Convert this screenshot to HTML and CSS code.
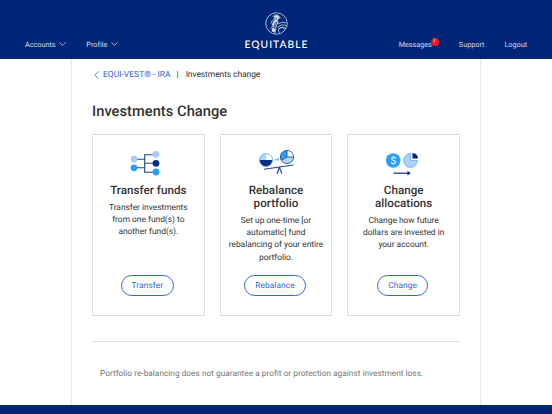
FILE: index.html
```
<!DOCTYPE html>
<html lang="en">
<head>
    <meta charset="UTF-8">
    <meta name="viewport" content="width=device-width, initial-scale=1.0">
    <title>Investments Change</title>
    <link rel="stylesheet" href="styles.css">
</head>
<body>
    <header class="header">
        <nav class="nav nav-left">
            <a class="accounts">Accounts <svg width="7" height="4" viewBox="0 0 7 4"><path d="M.5 .5L3.5 3.4L6.5 .5"/></svg></a>
            <a class="profile">Profile <svg width="7" height="4" viewBox="0 0 7 4"><path d="M.5 .5L3.5 3.4L6.5 .5"/></svg></a>
        </nav>
        <div class="logo">
            <svg width="23" height="23" viewBox="0 0 46 46">
                <circle cx="23" cy="23" r="21.5"/>
                <path d="M15 10q3-6 10-4q6 2 5 8M18 13q1-5 6-5q4 1 4 5M12 23q1-7 7-9l4 2l-1 6M20 17l-3 9l-6 8M22 19l-3 10l-4 10M24 22l-2 9l-2 12M26 24q8-6 17-2M25 30q7-7 18-3M27 34q4-5 15-2M29 42q-5-6 0-10q6-4 10 2"/>
                <path class="fill" d="M18 9q4-4 9-1l1 5l-3 3l2 5l-5 7l-3 13l-6-3l4-12l-4 2l3-8l4-4z"/>
                <path class="cut" d="M21 11l3 2l-3 2M21 20l-4 12M24 19l-5 15"/>
            </svg>
            <span>EQUITABLE</span>
        </div>
        <nav class="nav nav-right">
            <a class="messages">Messages<span class="badge">!</span></a>
            <a class="support">Support</a>
            <a class="logout">Logout</a>
        </nav>
    </header>

    <main class="content">
        <div class="breadcrumb">
            <svg width="5" height="8" viewBox="0 0 5 8"><path d="M4.5 .5L.8 4L4.5 7.5"/></svg>
            <a>EQUI-VEST® - IRA</a>
            <span class="divider">|</span>
            <span class="current">Investments change</span>
        </div>
        <h1>Investments Change</h1>

        <div class="cards">
            <section class="card">
                <svg class="icon icon-transfer" width="40" height="28" viewBox="0 0 40 28">
                    <path d="M9 10.2H19.7M9 18.8H19.7M31 5.7H19.7V23.3H31M19.7 14.3H31" fill="none" stroke="#26408f" stroke-width="1.1"/>
                    <circle cx="9" cy="10.2" r="3.4" fill="#a5d0ee"/>
                    <circle cx="9" cy="18.8" r="3.4" fill="#2b9ff8"/>
                    <circle cx="31" cy="5.3" r="3.4" fill="#a5d0ee"/>
                    <circle cx="31" cy="14.3" r="3.4" fill="#0b2d84"/>
                    <circle cx="31" cy="23" r="3.4" fill="#2b9ff8"/>
                </svg>
                <h2>Transfer funds</h2>
                <p>Transfer investments<br>from one fund(s) to<br>another fund(s).</p>
                <button>Transfer</button>
            </section>

            <section class="card">
                <svg class="icon" width="40" height="28" viewBox="0 0 40 28">
                    <circle cx="10" cy="11" r="6.5" fill="#a9d7f5"/>
                    <path d="M10 11V4.5A6.5 6.5 0 0 1 16.5 11Z" fill="#fff"/>
                    <path d="M3.5 11A6.5 6.5 0 0 0 16.5 11Z" fill="#0b2d84"/>
                    <circle cx="10" cy="11" r="6.5" fill="none" stroke="#48a9f0" stroke-width=".7"/>
                    <circle cx="31" cy="8" r="6.6" fill="#b1d8f3"/>
                    <path d="M31 8V1.4A6.6 6.6 0 0 0 25.3 11.3Z" fill="#2b9ff8"/>
                    <path d="M31 8V1.4A6.6 6.6 0 0 1 37.6 8Z" fill="#fff"/>
                    <path d="M31 1.4V8H37.6M31 8L25.3 11.3M24.4 8A6.6 6.6 0 1 0 37.6 8A6.6 6.6 0 1 0 24.4 8" fill="none" stroke="#174493" stroke-width=".8"/>
                    <path d="M18.2 11L22.5 10.4M21 9.3L22.8 10.4L21.2 11.7" fill="none" stroke="#48a9f0" stroke-width=".8"/>
                    <path d="M8 20.3L37.5 16M21 24.8L23.4 18.5L26 24.8" fill="none" stroke="#26408f" stroke-width="1.1"/>
                </svg>
                <h2>Rebalance<br>portfolio</h2>
                <p>Set up one-time [or<br>automatic] fund<br>rebalancing of your entire<br>portfolio.</p>
                <button>Rebalance</button>
            </section>

            <section class="card">
                <svg class="icon" width="40" height="28" viewBox="0 0 40 28">
                    <circle cx="9.2" cy="11.5" r="7.3" fill="#2b9ff8"/>
                    <text x="9.2" y="15" text-anchor="middle" font-size="10" fill="#fff">$</text>
                    <path d="M26.5 11.5V4.6A6.9 6.9 0 1 0 33.4 11.5Z" fill="#abd3ef" stroke="#55b2f3" stroke-width=".8"/>
                    <path d="M28.5 9.4V4A5.5 5.5 0 0 1 34 9.4Z" fill="#00237a"/>
                    <path d="M9.5 24.2H25.5" stroke="#0b2d84" stroke-width="1.2"/>
                    <path d="M23.5 21.8L26.8 24.2L23.5 26.6Z" fill="#0b2d84"/>
                </svg>
                <h2>Change<br>allocations</h2>
                <p>Change how future<br>dollars are invested in<br>your account.</p>
                <button>Change</button>
            </section>
        </div>

        <p class="note">Portfolio re-balancing does not guarantee a profit or protection against investment loss.</p>
    </main>
    <footer class="footer"></footer>
</body>
</html>
```
FILE: styles.css
```
* {
    box-sizing: border-box;
}

body {
    margin: 0;
    height: 414px;
    overflow: hidden;
    display: flex;
    flex-direction: column;
    font-family: Roboto, "Liberation Sans", sans-serif;
    text-rendering: geometricPrecision;
    color: #333;
    background-color: #fff;
}

.header {
    height: 59px;
    flex-shrink: 0;
    background-color: #002677;
    display: grid;
    grid-template-columns: 1fr 80px 1fr;
}

.nav {
    display: flex;
    padding-top: 39px;
    font-size: 7.3px;
    line-height: 11px;
    letter-spacing: -0.03px;
    color: #d4daea;
}

.nav-left {
    padding-left: 25px;
    gap: 20px;
}

.nav-right {
    justify-content: flex-end;
    padding-right: 25px;
}

.nav a {
    white-space: nowrap;
}

.nav svg {
    margin-left: 2px;
    vertical-align: 1px;
    fill: none;
    stroke: #ccd3e4;
    stroke-width: 0.8;
}

.messages {
    position: relative;
    margin-right: 27px;
}

.badge {
    position: absolute;
    left: 32px;
    top: -1px;
    width: 8px;
    height: 8px;
    border-radius: 50%;
    background-color: #f5151f;
    color: #fff;
    font-size: 6px;
    line-height: 8px;
    text-align: center;
}

.support {
    margin-right: 20px;
}

.logo {
    padding-top: 12px;
    display: flex;
    flex-direction: column;
    align-items: center;
    color: #fff;
}

.logo svg {
    fill: none;
    stroke: #dce2ef;
    stroke-width: 1.5;
}

.logo .fill {
    fill: #dce2ef;
    stroke: none;
}

.logo .cut {
    stroke: #002677;
}

.logo span {
    font-family: Lato, sans-serif;
    font-size: 10.3px;
    font-weight: 500;
    line-height: 12px;
    letter-spacing: 1px;
    margin-top: 4px;
    margin-right: -1px;
}

.content {
    width: 410px;
    height: 346px;
    margin: 0 auto;
    padding: 10px 20px 0;
    border-left: 1px solid #e8e8e8;
    border-right: 1px solid #e8e8e8;
}

.breadcrumb {
    display: flex;
    align-items: center;
    height: 11px;
    padding-left: 2px;
    font-size: 8.5px;
    white-space: nowrap;
}

.breadcrumb svg {
    margin-right: 4px;
    fill: none;
    stroke: #3f6fe0;
    stroke-width: 0.8;
}

.breadcrumb a {
    color: #3266dc;
}

.divider {
    margin: 0 7px 0 6px;
}

.current {
    letter-spacing: -0.1px;
}

h1 {
    margin: 22px 0 13px;
    font-size: 14.7px;
    font-weight: 500;
    line-height: 19px;
    letter-spacing: 0.02px;
}

.cards {
    display: grid;
    grid-template-columns: repeat(3, 1fr);
    gap: 15px;
    height: 208px;
    padding-bottom: 25px;
    border-bottom: 1px solid #ddd;
}

.card {
    display: flex;
    flex-direction: column;
    align-items: center;
    border: 1px solid #dcdcdc;
    padding: 14px 0 19px;
    text-align: center;
    white-space: nowrap;
}

.icon {
    flex-shrink: 0;
}

.icon-transfer {
    margin-left: -6px;
}

h2 {
    margin: 7px 0 5px;
    font-size: 11.6px;
    font-weight: 500;
    line-height: 13px;
    letter-spacing: 0.03px;
}

.card p {
    margin: 0;
    font-size: 8.4px;
    line-height: 12.2px;
}

button {
    margin-top: auto;
    margin-left: -2px;
    height: 21px;
    padding: 0 10px;
    border: 1px solid #3266dc;
    border-radius: 11px;
    background-color: #fff;
    color: #3266dc;
    font-family: inherit;
    text-rendering: inherit;
    font-size: 8.4px;
    letter-spacing: 0.06px;
}

.note {
    margin: 26px 0 0 8px;
    font-size: 8.3px;
    line-height: 12px;
    color: #777;
    letter-spacing: 0.01px;
    white-space: nowrap;
}

.footer {
    flex: 1;
    background-color: #002677;
}
```
